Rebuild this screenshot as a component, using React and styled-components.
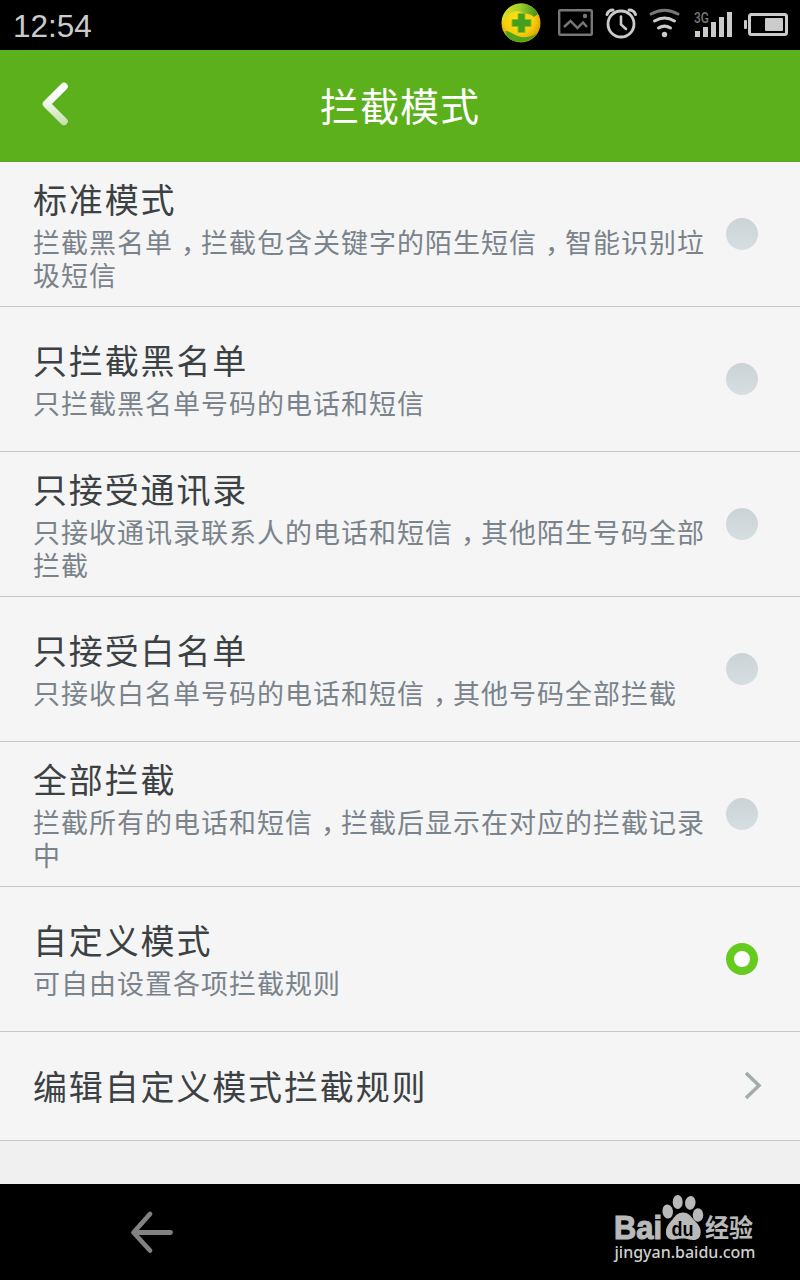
import React, { useState } from "react";
import styled, { createGlobalStyle } from 'styled-components';

const GlobalStyle = createGlobalStyle`
  * {
    box-sizing: border-box;
  }
  body {
    margin: 0;
    background: #000000;
    font-family: Roboto, "Noto Sans CJK SC", sans-serif;
  }
`;

const Container = styled.div`
  width: 800px;
  height: 1280px;
  display: flex;
  flex-direction: column;
  overflow: hidden;
  background: #f0f0f0;
`;

const StatusBar = styled.div`
  height: 50px;
  flex-shrink: 0;
  display: flex;
  justify-content: space-between;
  background: #000000;
`;

const Clock = styled.div`
  padding: 2px 0 0 13px;
  font-family: "Liberation Sans", Arial, sans-serif;
  font-size: 31.5px;
  line-height: 48px;
  color: #cbcbcb;
`;

const StatusIcons = styled.svg`
  width: 310px;
  height: 50px;
  display: block;
`;

const NetworkText = styled.text`
  font-family: Roboto, sans-serif;
  font-size: 14px;
  font-weight: 500;
  fill: #777777;
`;

const Header = styled.header`
  height: 112px;
  flex-shrink: 0;
  display: grid;
  grid-template-columns: 110px 1fr 110px;
  align-items: center;
  background: #5bb01c;
  border-bottom: 1px solid #54a31a;
`;

const HeaderButton = styled.button`
  height: 100%;
  padding: 0;
  border: none;
  background: none;
`;

const HeaderTitle = styled.h1`
  margin: 0;
  padding-top: 3px;
  font-size: 39px;
  letter-spacing: 1px;
  line-height: 48px;
  font-weight: 400;
  text-align: center;
  color: #ffffff;
`;

const ModeList = styled.main`
  display: flex;
  flex-direction: column;
  flex-grow: 1;
`;

const ModeRow = styled.div`
  height: ${(props) => props.$height || 145}px;
  flex-shrink: 0;
  padding: 0 42px 0 33px;
  display: flex;
  align-items: center;
  justify-content: space-between;
  background: #f5f5f5;
  border-bottom: 1px solid #c8c8c8;
`;

const ModeText = styled.div`
  width: 674px;
  padding-top: 5px;
`;

const ModeTitle = styled.div`
  font-size: 34px;
  letter-spacing: 1.85px;
  line-height: 42px;
  color: #3c4144;
`;

const EditTitle = styled(ModeTitle)`
  padding-top: 3px;
`;

const ModeDesc = styled.div`
  padding-top: 6px;
  font-size: 27px;
  letter-spacing: 1px;
  line-height: 33px;
  color: #7a838b;
`;

/* half-width comma, centred in a full-width cell */
const Comma = styled.span`
  padding: 0 5.5px 0 8px;
  font-feature-settings: "halt";
`;

const Radio = styled.button`
  width: 32px;
  height: 32px;
  flex-shrink: 0;
  padding: 0;
  border: ${(props) => (props.$checked ? '8px solid #66cb1f' : 'none')};
  border-radius: 50%;
  background: ${(props) => (props.$checked ? '#ffffff' : 'linear-gradient(#cbd3d7, #d7dee1)')};
`;

const Arrow = styled.svg`
  width: 20px;
  height: 30px;
  margin: 0 -5px 2px 0;
`;

const NavBar = styled.footer`
  height: 96px;
  flex-shrink: 0;
  display: flex;
  align-items: center;
  justify-content: space-between;
  padding: 0 20px 0 128px;
  background: #000000;
`;

const Watermark = styled.svg`
  width: 190px;
  height: 96px;
`;

const LogoText = styled.text`
  font-family: ${(props) => props.$family || '"Liberation Sans"'}, "Noto Sans CJK SC", sans-serif;
  font-size: ${(props) => props.$size}px;
  font-weight: ${(props) => props.$weight || 700};
  fill: ${(props) => props.$color || '#b9b9b9'};
`;

const modes = [
  { id: 'standard', title: '标准模式', desc: '拦截黑名单，拦截包含关键字的陌生短信，智能识别垃圾短信' },
  { id: 'blacklist', title: '只拦截黑名单', desc: '只拦截黑名单号码的电话和短信' },
  { id: 'contacts', title: '只接受通讯录', desc: '只接收通讯录联系人的电话和短信，其他陌生号码全部拦截' },
  { id: 'whitelist', title: '只接受白名单', desc: '只接收白名单号码的电话和短信，其他号码全部拦截' },
  { id: 'all', title: '全部拦截', desc: '拦截所有的电话和短信，拦截后显示在对应的拦截记录中' },
  { id: 'custom', title: '自定义模式', desc: '可自由设置各项拦截规则' },
];

const Description = ({ text }) => (
  <ModeDesc>
    {text.split('，').map((part, index) => (
      <React.Fragment key={index}>
        {index > 0 && <Comma>，</Comma>}
        {part}
      </React.Fragment>
    ))}
  </ModeDesc>
);

const StatusIconGroup = () => (
  <StatusIcons viewBox="490 0 310 50" fill="none">
    <defs>
      <radialGradient id="ball" cx="0.45" cy="0.4" r="0.6">
        <stop offset="0" stopColor="#ffe818" />
        <stop offset="0.65" stopColor="#f8cc0c" />
        <stop offset="1" stopColor="#dda000" />
      </radialGradient>
      <linearGradient id="leaf" x1="0" y1="0" x2="1" y2="0">
        <stop offset="0" stopColor="#d6e42a" />
        <stop offset="0.5" stopColor="#9fce2a" />
        <stop offset="1" stopColor="#3f8f1c" />
      </linearGradient>
    </defs>
    {/* security badge */}
    <circle cx="521" cy="23" r="19.5" fill="url(#ball)" />
    <path d="M502 24C501 13 510 4 521 3.500C528 3.300 534 7 538 14L534 17C530 13 524 14 518 11C511 11 505 16 502 24Z" fill="url(#leaf)" />
    <path d="M505 31C511 31 515 36 521 37C527 38 533 36 537 33C532 41 522 43.500 514 41C509 39.500 506 36 505 31Z" fill="#51a51c" />
    <path d="M518 13.500H525V19.500H531V26.500H525V32.500H518V26.500H512V19.500H518Z" fill="#449f1c" stroke="#8ebd1a" strokeWidth="1" strokeLinejoin="round" />
    {/* picture */}
    <rect x="559.200" y="10.200" width="32.600" height="24.600" rx="1" stroke="#777777" strokeWidth="2.400" />
    <path d="M564 27L570.500 21L577.500 28L583 22.500L587 27" stroke="#777777" strokeWidth="2.400" />
    <circle cx="585" cy="16" r="2.200" fill="#777777" />
    {/* alarm */}
    <g stroke="#cbcbcb" strokeLinecap="round">
      <circle cx="621" cy="24" r="13" strokeWidth="2.800" />
      <path d="M621 16.500V24.500L626 29" strokeWidth="2.600" />
      <path d="M607 14.500C608 11.500 610 10 613 10M629 10C632 10 634.500 11.500 635.500 14.500" strokeWidth="3" />
    </g>
    {/* wifi */}
    <g strokeWidth="3" strokeLinecap="round">
      <path d="M651 14C660 9 669 9 678 14" stroke="#777777" />
      <path d="M654.500 21C661 17 668 17 674.500 21" stroke="#cbcbcb" />
      <path d="M658.500 28C662.500 25.500 666.500 25.500 670.500 28" stroke="#cbcbcb" />
    </g>
    <circle cx="664.500" cy="34.500" r="2.700" fill="#cbcbcb" />
    {/* mobile signal */}
    <NetworkText x="694" y="22.500" textLength="15" lengthAdjust="spacingAndGlyphs">3G</NetworkText>
    <path d="M695 31H700V37H695ZM703 27H708V37H703ZM711 22H716V37H711ZM719 17H724V37H719ZM727 12H732V37H727Z" fill="#cbcbcb" />
    {/* battery */}
    <rect x="749.500" y="14.500" width="37" height="20" rx="2" stroke="#cbcbcb" strokeWidth="3" />
    <rect x="765" y="18" width="18" height="13" rx="1" fill="#cbcbcb" />
    <rect x="744" y="20" width="3" height="9" rx="1" fill="#cbcbcb" />
  </StatusIcons>
);

const BaiduLogo = () => (
  <Watermark viewBox="590 1184 190 96">
    <LogoText x="614" y="1238.500" $size={33} stroke="#b9b9b9" strokeWidth="1.2" textLength="48" lengthAdjust="spacingAndGlyphs">Bai</LogoText>
    <g fill="#b9b9b9">
      <ellipse cx="667.700" cy="1211.500" rx="5.300" ry="7" transform="rotate(-8 667.700 1211.500)" />
      <ellipse cx="677.700" cy="1202" rx="5" ry="7" />
      <ellipse cx="690.300" cy="1202.800" rx="5.200" ry="6.900" transform="rotate(8 690.300 1202.800)" />
      <ellipse cx="698" cy="1215" rx="5.300" ry="6.700" />
      <path d="M683 1212.500C688 1212.500 691 1216 694 1220C698 1224 701.500 1228 700.500 1234C699.500 1240.500 694 1240.500 689 1239.500C684 1238 681 1238.500 675 1239.500C669 1240.500 665.500 1237 666 1231C666.500 1226 669.500 1223 672.500 1219.500C675.500 1215.500 678 1212.500 683 1212.500Z" />
    </g>
    <LogoText x="671.500" y="1235.500" $size={21} $color="#000000" textLength="22" lengthAdjust="spacingAndGlyphs">du</LogoText>
    <LogoText x="705" y="1236.500" $size={25} $family='"Noto Sans CJK SC"' textLength="48" lengthAdjust="spacingAndGlyphs">经验</LogoText>
    <LogoText x="614.500" y="1257.500" $size={17} $weight={500} $family='"Noto Sans"' $color="#cfcfcf" textLength="141" lengthAdjust="spacingAndGlyphs">jingyan.baidu.com</LogoText>
  </Watermark>
);

const App = () => {
  const [selected, setSelected] = useState('custom');

  return (
    <>
      <GlobalStyle />
      <Container>
        <StatusBar>
          <Clock>12:54</Clock>
          <StatusIconGroup />
        </StatusBar>
        <Header>
          <HeaderButton aria-label="返回">
            <svg width="110" height="110" viewBox="0 50 110 110" fill="none">
              <defs>
                <linearGradient id="back" x1="0" y1="82" x2="0" y2="126" gradientUnits="userSpaceOnUse">
                  <stop offset="0.3" stopColor="#ffffff" />
                  <stop offset="1" stopColor="#bfe0a5" />
                </linearGradient>
              </defs>
              <path d="M64.500 87.500L47.500 104.500L64.500 123" stroke="#4b9417" strokeOpacity="0.45" strokeWidth="7" strokeLinecap="round" strokeLinejoin="round" />
              <path d="M64 86.500L46.500 104L64 121.500" stroke="url(#back)" strokeWidth="7.500" strokeLinecap="round" strokeLinejoin="round" />
            </svg>
          </HeaderButton>
          <HeaderTitle>拦截模式</HeaderTitle>
        </Header>
        <ModeList>
          {modes.map((mode) => (
            <ModeRow key={mode.id} onClick={() => setSelected(mode.id)}>
              <ModeText>
                <ModeTitle>{mode.title}</ModeTitle>
                <Description text={mode.desc} />
              </ModeText>
              <Radio $checked={selected === mode.id} aria-label={mode.title} />
            </ModeRow>
          ))}
          <ModeRow $height={109}>
            <EditTitle>编辑自定义模式拦截规则</EditTitle>
            <Arrow viewBox="0 0 20 30" fill="none">
              <path d="M3 3L16 15.500L3 28" stroke="#a3abad" strokeWidth="3.500" />
            </Arrow>
          </ModeRow>
        </ModeList>
        <NavBar>
          <svg width="48" height="48" viewBox="128 1208 48 48" fill="none">
            <path d="M150 1214L133.500 1232.500L150 1250.500M134 1232.500H170.500" stroke="#828282" strokeWidth="4.800" strokeLinecap="round" strokeLinejoin="round" />
          </svg>
          <BaiduLogo />
        </NavBar>
      </Container>
    </>
  );
};

export default App;
